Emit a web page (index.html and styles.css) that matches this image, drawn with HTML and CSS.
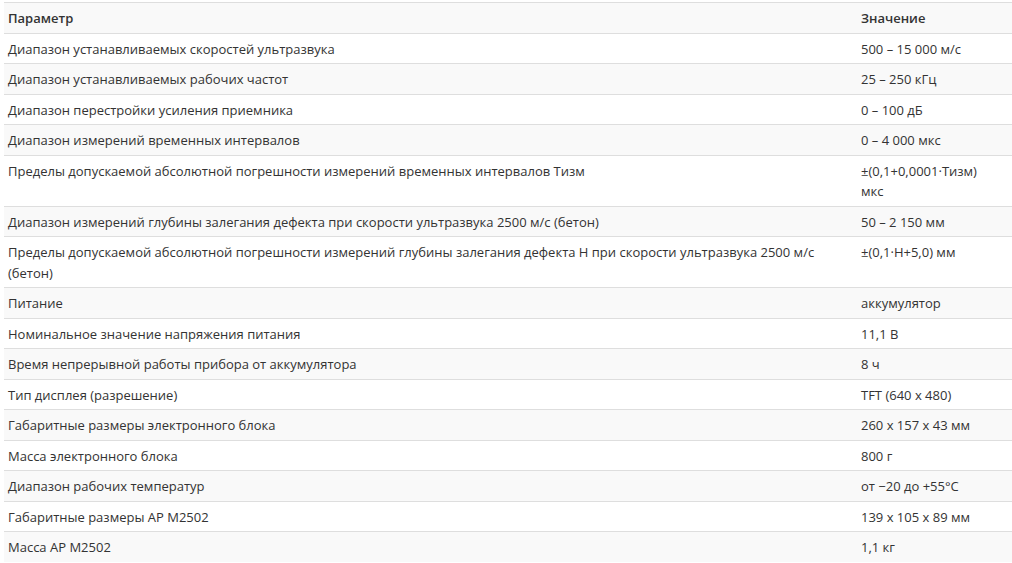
FILE: index.html
```html
<!DOCTYPE html>
<html lang="ru">
<head>
<meta charset="utf-8">
<link rel="stylesheet" href="styles.css">
</head>
<body>
<table class="spec">
  <colgroup><col class="c-name"><col class="c-val"></colgroup>
  <thead>
    <tr><th>Параметр</th><th>Значение</th></tr>
  </thead>
  <tbody>
    <tr><td>Диапазон устанавливаемых скоростей ультразвука</td><td>500 – 15 000 м/с</td></tr>
    <tr><td>Диапазон устанавливаемых рабочих частот</td><td>25 – 250 кГц</td></tr>
    <tr><td>Диапазон перестройки усиления приемника</td><td>0 – 100 дБ</td></tr>
    <tr><td>Диапазон измерений временных интервалов</td><td>0 – 4 000 мкс</td></tr>
    <tr><td>Пределы допускаемой абсолютной погрешности измерений временных интервалов Тизм</td><td>±(0,1+0,0001·Тизм) мкс</td></tr>
    <tr><td>Диапазон измерений глубины залегания дефекта при скорости ультразвука 2500 м/с (бетон)</td><td>50 – 2 150 мм</td></tr>
    <tr><td>Пределы допускаемой абсолютной погрешности измерений глубины залегания дефекта Н при скорости ультразвука 2500 м/с (бетон)</td><td>±(0,1·Н+5,0) мм</td></tr>
    <tr><td>Питание</td><td>аккумулятор</td></tr>
    <tr><td>Номинальное значение напряжения питания</td><td>11,1 В</td></tr>
    <tr><td>Время непрерывной работы прибора от аккумулятора</td><td>8 ч</td></tr>
    <tr><td>Тип дисплея (разрешение)</td><td>TFT (640 x 480)</td></tr>
    <tr><td>Габаритные размеры электронного блока</td><td>260 x 157 x 43 мм</td></tr>
    <tr><td>Масса электронного блока</td><td>800 г</td></tr>
    <tr><td>Диапазон рабочих температур</td><td>от −20 до +55°С</td></tr>
    <tr><td>Габаритные размеры АР М2502</td><td>139 x 105 x 89 мм</td></tr>
    <tr><td>Масса АР М2502</td><td>1,1 кг</td></tr>
  </tbody>
</table>
</body>
</html>
```
FILE: styles.css
```css
html, body {
  margin: 0;
  padding: 0;
  background: #fff;
}
body {
  padding: 2px 0 0 4px;
  font-family: "Open Sans", "Noto Sans", sans-serif;
  font-size: 13px;
  color: #333;
}
.spec {
  width: 1008px;
  table-layout: fixed;
  border-collapse: collapse;
  border-spacing: 0;
}
.c-name { width: 853px; }
.c-val { width: 155px; }
.spec th,
.spec td {
  text-align: left;
  vertical-align: top;
  padding: 5px 4px 4px 4px;
  line-height: 20.5px;
  border-top: 1px solid #dedede;
}
.spec td:last-child,
.spec th:last-child {
  padding-right: 16px;
}
.spec th {
  font-weight: 600;
  background: #f9f9f9;
  border-bottom: 1px solid #dedede;
}
.spec tbody tr:nth-child(even) td {
  background: #f9f9f9;
}
```
